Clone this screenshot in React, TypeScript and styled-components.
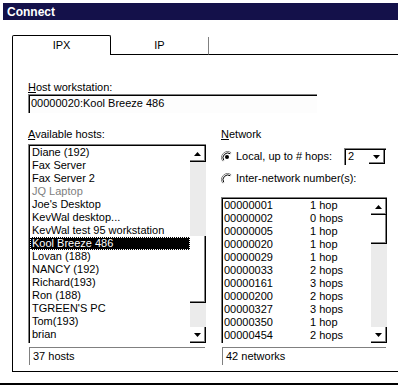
import React from 'react';
import styled, { createGlobalStyle } from 'styled-components';

const Global = createGlobalStyle`
  html, body { margin: 0; padding: 0; background: #fff; }
  body {
    width: 398px; height: 386px; overflow: hidden;
    font-family: "Liberation Sans", Arial, sans-serif;
    font-size: 11px; color: #000;
  }
  * { box-sizing: border-box; }
`;

const Window = styled.div`
  width: 398px;
  height: 386px;
  overflow: hidden;
  background: #fff;
  padding-top: 3px;
  display: flex;
  flex-direction: column;
`;

const TitleBar = styled.div`
  margin-left: 3px;
  height: 17px;
  background: #14114a;
  color: #fff;
  font-weight: bold;
  font-size: 12px;
  display: flex;
  align-items: center;
  padding-left: 4px;
`;

const TabRow = styled.div`
  margin-top: 15px;
  margin-left: 12px;
  height: 20px;
  display: flex;
  align-items: flex-end;
`;

const Tab = styled.div<{ $active?: boolean }>`
  width: ${(p) => (p.$active ? 99 : 98)}px;
  height: ${(p) => (p.$active ? 20 : 18)}px;
  display: flex;
  align-items: center;
  justify-content: center;
  padding-top: ${(p) => (p.$active ? 0 : 0)}px;
  border-top: ${(p) => (p.$active ? '1px solid #000' : 'none')};
  border-left: ${(p) => (p.$active ? '1px solid #000' : 'none')};
  border-right: 1px solid ${(p) => (p.$active ? '#000' : '#808080')};
  border-bottom: ${(p) => (p.$active ? 'none' : '1px solid #000')};
  border-radius: ${(p) => (p.$active ? '2px 2px 0 0' : '0')};
  line-height: 13px;
`;

const TabFiller = styled.div`
  flex: 1;
  height: 1px;
  background: #000;
`;

const Panel = styled.div`
  margin-left: 12px;
  width: 420px;
  height: 317px;
  border-left: 1px solid #000;
  border-bottom: 1px solid #000;
  padding: 26px 0 0 15px;
  display: flex;
  flex-direction: column;
`;

const Label = styled.div`
  line-height: 13px;
  height: 13px;
  white-space: nowrap;
`;

const TextBox = styled.div`
  width: 289px;
  height: 19px;
  box-shadow: inset 1px 1px #808080, inset 2px 2px #000;
  background: #fdfdfd;
  padding: 2px 0 0 3px;
  line-height: 15px;
  white-space: nowrap;
`;

const Columns = styled.div`
  margin-top: 15px;
  display: grid;
  grid-template-columns: 178px 165px;
  column-gap: 15px;
`;

const Column = styled.div`
  display: flex;
  flex-direction: column;
`;

const ListBox = styled.div<{ $width: number; $height: number }>`
  width: ${(p) => p.$width}px;
  height: ${(p) => p.$height}px;
  box-shadow: inset 1px 1px #808080, inset 2px 2px #000;
  background: #fff;
  padding: 2px 0 0 2px;
  display: flex;
`;

const Items = styled.div`
  flex: 1;
  display: flex;
  flex-direction: column;
  min-width: 0;
`;

const Item = styled.div<{ $selected?: boolean; $disabled?: boolean }>`
  height: 13px;
  line-height: 13px;
  padding-left: 2px;
  white-space: nowrap;
  background: ${(p) => (p.$selected ? '#000' : 'transparent')};
  color: ${(p) => (p.$selected ? '#fff' : p.$disabled ? '#808080' : '#000')};
  outline: ${(p) => (p.$selected ? '1px dotted #fff' : 'none')};
  outline-offset: -1px;
`;

const NetItem = styled.div`
  height: 13px;
  line-height: 13px;
  padding-left: 1px;
  display: grid;
  grid-template-columns: 86px 1fr;
  white-space: nowrap;
`;

const ScrollBar = styled.div`
  width: 16px;
  display: flex;
  flex-direction: column;
`;

const ScrollButton = styled.div`
  width: 16px;
  height: 16px;
  flex: none;
  background: #fff;
  box-shadow: inset -1px -1px #000, inset -2px -2px #808080;
  display: flex;
  align-items: center;
  justify-content: center;
  padding: 0 1px 1px 0;
`;

const Track = styled.div<{ $h?: number }>`
  background: #ebebeb;
  flex: ${(p) => (p.$h === undefined ? '1' : 'none')};
  height: ${(p) => (p.$h === undefined ? 'auto' : `${p.$h}px`)};
`;

const Thumb = styled.div<{ $h: number }>`
  height: ${(p) => p.$h}px;
  flex: none;
  background: #fff;
  box-shadow: inset -1px -1px #000, inset -2px -2px #808080;
`;

const StatusBox = styled.div<{ $width: number }>`
  margin-top: 4px;
  margin-left: 1px;
  width: ${(p) => p.$width}px;
  height: 18px;
  border-top: 1px solid #808080;
  border-left: 1px solid #808080;
  padding: 2px 0 0 3px;
  line-height: 13px;
`;

const RadioRow = styled.div<{ $mt: number; $h: number }>`
  margin-top: ${(p) => p.$mt}px;
  height: ${(p) => p.$h}px;
  width: 165px;
  display: flex;
  align-items: center;
`;

const RadioLabel = styled.span`
  margin-left: 3px;
  line-height: 13px;
  white-space: nowrap;
  flex: 1;
`;

const Combo = styled.div`
  width: 42px;
  height: 17px;
  box-shadow: inset 1px 1px #808080, inset 2px 2px #000;
  background: #fff;
  display: flex;
  padding: 2px 1px 0 2px;
`;

const ComboText = styled.div`
  flex: 1;
  line-height: 13px;
  padding-left: 2px;
`;

const ComboButton = styled(ScrollButton)`
  width: 16px;
  height: 14px;
`;

const BottomLine = styled.div`
  margin-top: 11px;
  height: 2px;
  background: #000;
`;

const Arrow = ({ up }: { up?: boolean }) => (
  <svg width="7" height="4" viewBox="0 0 7 4" style={{ display: 'block' }}>
    {up ? <polygon points="3.5,0 7,4 0,4" fill="#000" /> : <polygon points="0,0 7,0 3.5,4" fill="#000" />}
  </svg>
);

const Radio = ({ checked }: { checked?: boolean }) => (
  <svg width="12" height="12" viewBox="0 0 12 12" style={{ display: 'block', flex: 'none' }}>
    <path d="M10.2 1.8 A6 6 0 0 0 1.8 10.2" stroke="#808080" strokeWidth="1" fill="none" />
    <path d="M9.3 2.7 A4.8 4.8 0 0 0 2.7 9.3" stroke="#000" strokeWidth="1" fill="none" />
    {checked && <circle cx="6" cy="6" r="2" fill="#000" />}
  </svg>
);

const hosts: { name: string; selected?: boolean; disabled?: boolean }[] = [
  { name: 'Diane (192)' },
  { name: 'Fax Server' },
  { name: 'Fax Server 2' },
  { name: 'JQ Laptop', disabled: true },
  { name: "Joe's Desktop" },
  { name: 'KevWal desktop...' },
  { name: 'KevWal test 95 workstation' },
  { name: 'Kool Breeze 486', selected: true },
  { name: 'Lovan (188)' },
  { name: 'NANCY (192)' },
  { name: 'Richard(193)' },
  { name: 'Ron (188)' },
  { name: "TGREEN'S PC" },
  { name: 'Tom(193)' },
  { name: 'brian' },
];

const networks: [string, string][] = [
  ['00000001', '1 hop'],
  ['00000002', '0 hops'],
  ['00000005', '1 hop'],
  ['00000020', '1 hop'],
  ['00000029', '1 hop'],
  ['00000033', '2 hops'],
  ['00000161', '3 hops'],
  ['00000200', '2 hops'],
  ['00000327', '3 hops'],
  ['00000350', '1 hop'],
  ['00000454', '2 hops'],
];

export default function App() {
  return (
    <Window>
      <Global />
      <TitleBar>Connect</TitleBar>
      <TabRow>
        <Tab $active>IPX</Tab>
        <Tab>IP</Tab>
        <TabFiller />
      </TabRow>
      <Panel>
        <Label>
          <u>H</u>ost workstation:
        </Label>
        <TextBox>00000020:Kool Breeze 486</TextBox>
        <Columns>
          <Column>
            <Label>
              <u>A</u>vailable hosts:
            </Label>
            <div style={{ height: 3 }} />
            <ListBox $width={178} $height={199}>
              <Items>
                {hosts.map((h) => (
                  <Item key={h.name} $selected={h.selected} $disabled={h.disabled}>
                    {h.name}
                  </Item>
                ))}
              </Items>
              <ScrollBar>
                <ScrollButton>
                  <Arrow up />
                </ScrollButton>
                <Track $h={74} />
                <Thumb $h={67} />
                <Track />
                <ScrollButton>
                  <Arrow />
                </ScrollButton>
              </ScrollBar>
            </ListBox>
            <StatusBox $width={176}>37 hosts</StatusBox>
          </Column>
          <Column>
            <Label>
              <u>N</u>etwork
            </Label>
            <RadioRow $mt={7} $h={17}>
              <Radio checked />
              <RadioLabel>Local, up to # hops:</RadioLabel>
              <Combo>
                <ComboText>2</ComboText>
                <ComboButton>
                  <Arrow />
                </ComboButton>
              </Combo>
            </RadioRow>
            <RadioRow $mt={7} $h={13}>
              <Radio />
              <RadioLabel>Inter-network number(s):</RadioLabel>
            </RadioRow>
            <div style={{ height: 12 }} />
            <ListBox $width={166} $height={146}>
              <Items>
                {networks.map(([id, hops]) => (
                  <NetItem key={id}>
                    <span>{id}</span>
                    <span>{hops}</span>
                  </NetItem>
                ))}
              </Items>
              <ScrollBar>
                <ScrollButton>
                  <Arrow up />
                </ScrollButton>
                <Thumb $h={29} />
                <Track />
                <ScrollButton>
                  <Arrow />
                </ScrollButton>
              </ScrollBar>
            </ListBox>
            <StatusBox $width={164}>42 networks</StatusBox>
          </Column>
        </Columns>
      </Panel>
      <BottomLine />
    </Window>
  );
}
